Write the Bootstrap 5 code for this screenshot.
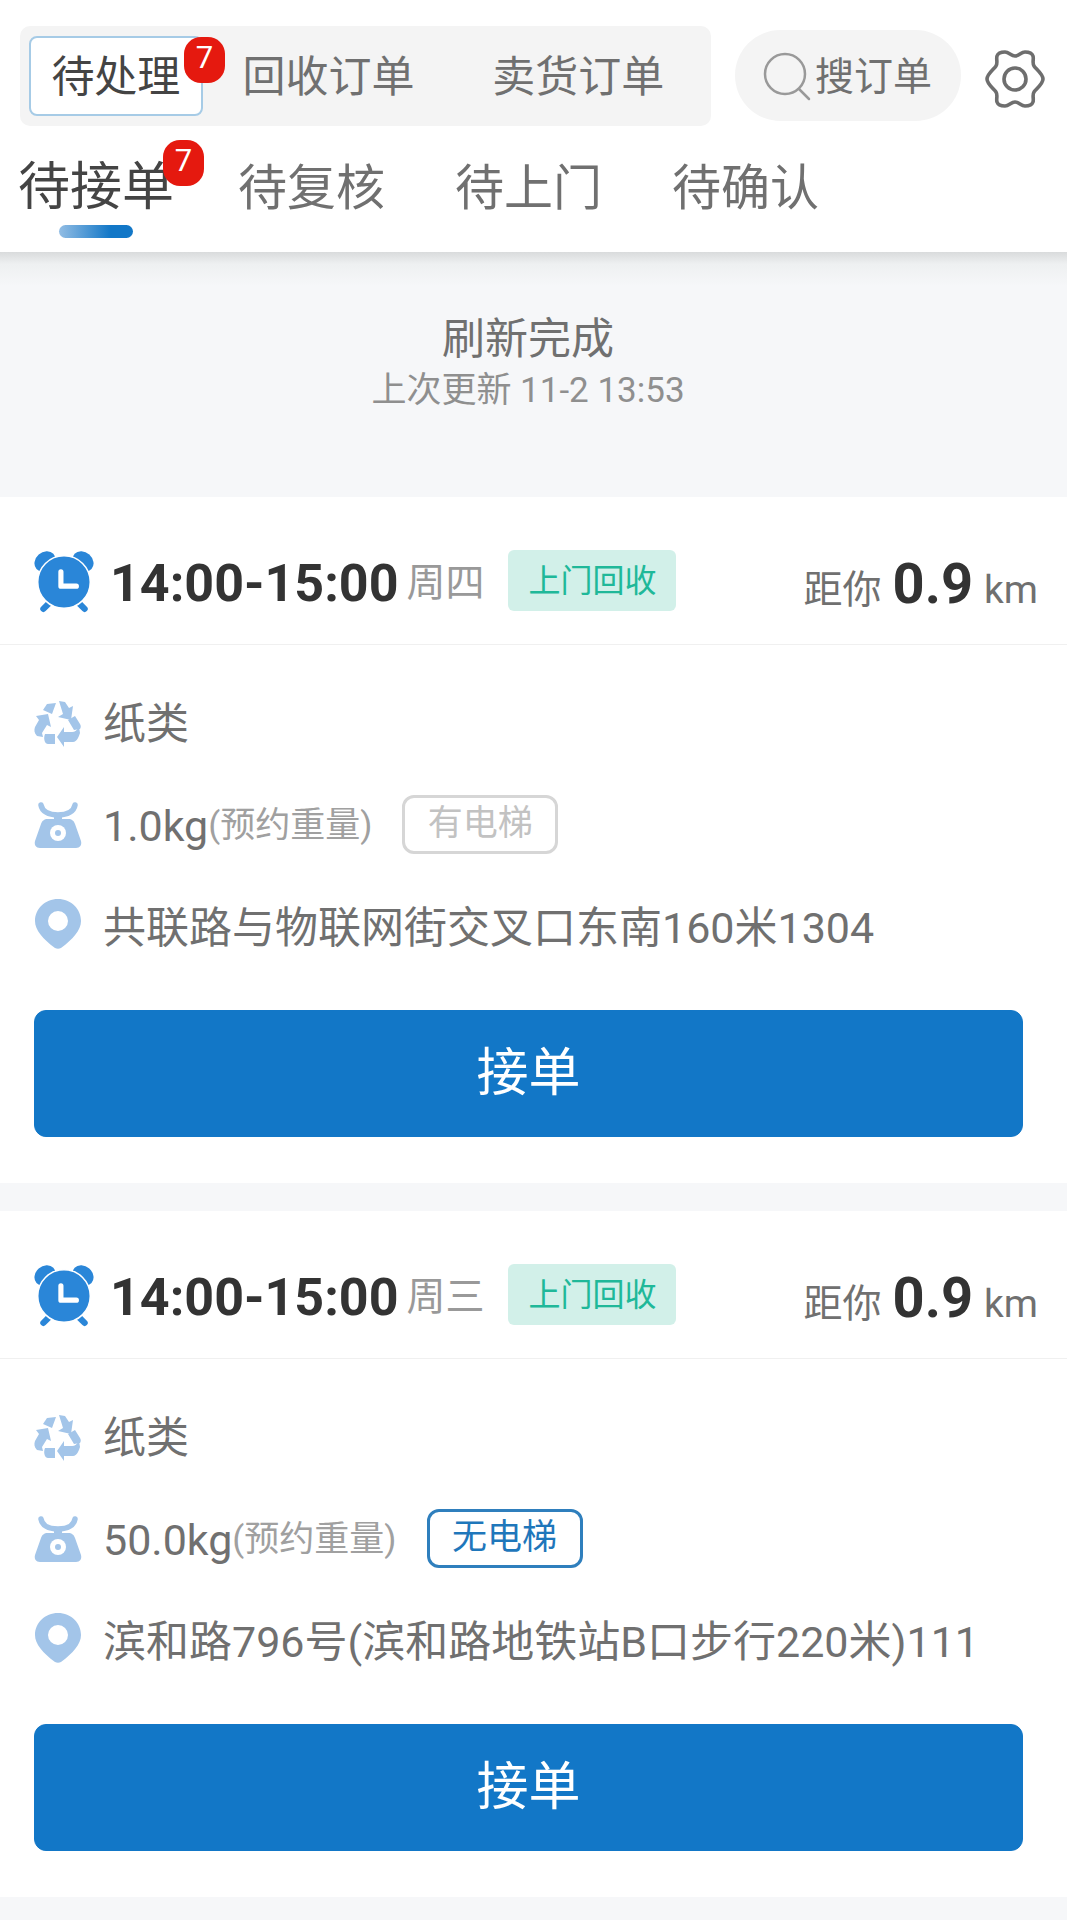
<!DOCTYPE html>
<html lang="zh-CN">
<head>
  <meta charset="UTF-8">
  <meta name="viewport" content="width=device-width, initial-scale=1.0">
  <title>待处理订单</title>
  <link href="https://cdn.jsdelivr.net/npm/bootstrap@5.3.3/dist/css/bootstrap.min.css" rel="stylesheet">
  <style>
    body {
      width: 1080px;
      height: 1920px;
      overflow: hidden;
      background: #fff;
      font-family: Roboto, "Noto Sans CJK SC", sans-serif;
      color: #707070;
    }
    .page-wrap { width: 1067px; height: 1920px; background: #f6f7f9; }
    .top-head { height: 252px; background: #fff; padding: 26px 0 0 20px; }
    .seg-box { width: 691px; height: 100px; background: #f4f4f4; border-radius: 10px; padding: 10px 9px; }
    .seg-item { width: 250px; font-size: 43px; line-height: 1; color: #707070; padding-top: 3px; padding-left: 2px; }
    .seg-item.on { width: 174px; background: #fff; border: 2px solid #a6cbe6; border-radius: 8px; color: #444; padding-left: 0; }
    .search-pill { width: 226px; height: 91px; margin: 0 0 0 24px; background: #f4f4f4; border-radius: 46px; padding: 3px 0 0 28px; font-size: 39px; color: #707070; }
    .gear { margin-left: 24px; }
    .count-dot {
      top: -1px; width: 41px; height: 46px; background: #e5190f; color: #fff; border-radius: 17px;
      font-size: 31px; line-height: 42px; text-align: center;
    }
    .count-seg { left: 153px; }
    .tab-row { height: 124px; gap: 70px; margin-left: -2px; }
    .tab-item { font-size: 49px; line-height: 1; color: #707070; }
    .tab-item.on { font-size: 52px; color: #444; margin-right: -6px; }
    .count-tab { left: 145px; top: -22px; }
    .tab-bar {
      left: 41px; top: 63px; width: 74px; height: 13px; border-radius: 7px;
      background: linear-gradient(90deg, #92bde4, #1277c7 70%);
    }
    .refresh-box {
      height: 245px; padding: 59px 11px 0 0; text-align: center;
      background: linear-gradient(#d9dbdc, #eef0f1 12px, #f6f7f9 34px);
    }
    .refresh-main { font-size: 43px; line-height: 56px; color: #707070; }
    .refresh-sub { font-size: 35px; line-height: 48px; color: #8f8f8f; }
    .order-box { height: 686px; background: #fff; margin-bottom: 28px; }
    .order-head { height: 148px; padding: 20px 29px 0 33px; border-bottom: 1px solid #f0f0f0; }
    .time-text { font-size: 52px; font-weight: 700; color: #333; margin: 6px 0 0 15px; line-height: 1; }
    .week-text { font-size: 39px; color: #999; margin: 6px 0 0 8px; line-height: 1; }
    .tag-green { width: 168px; height: 61px; background: #d2f0e9; color: #20b899; border-radius: 6px; font-size: 32px; margin-left: 24px; }
    .dist-text { font-size: 39px; color: #707070; line-height: 1; padding-top: 6px; }
    .dist-text b { font-size: 56px; color: #333; margin: 0 11px; }
    .dist-text .km-unit { font-size: 39px; }
    .order-body { padding: 28px 34px 0; }
    .info-row { height: 102px; font-size: 43px; color: #707070; }
    .info-row svg { flex: none; margin-right: 21px; }
    .info-row .pin-ic { margin-top: -8px; }
    .hint-text { font-size: 35px; color: #a0a0a0; }
    .lift-tag { width: 156px; height: 59px; border: 3px solid #d6d6d6; border-radius: 12px; color: #c2c2c2; font-size: 35px; margin: -4px 0 0 30px; }
    .lift-tag.has-none { border-color: #2f7fbd; color: #1f77bb; }
    .take-btn { width: 989px; height: 127px; margin-top: 31px; background: #1277c7; border-color: #1277c7; border-radius: 12px; font-size: 52px; color: #fff; }
  </style>
</head>
<body>
  <svg width="0" height="0" class="position-absolute">
    <defs>
      <symbol id="ic-clock" viewBox="0 0 60 64">
        <ellipse cx="11.500" cy="13" rx="11" ry="9" transform="rotate(-42 11.500 13)" fill="#2a86d8"/>
        <ellipse cx="48.500" cy="13" rx="11" ry="9" transform="rotate(42 48.500 13)" fill="#2a86d8"/>
        <path d="M15 54l-5 5M45 54l5 5" stroke="#2a86d8" stroke-width="6" stroke-linecap="round"/>
        <circle cx="30" cy="33" r="25.500" fill="#2a86d8" stroke="#fff" stroke-width="1.500"/>
        <path d="M27 23v14h15" fill="none" stroke="#fff" stroke-width="5" stroke-linecap="round" stroke-linejoin="round"/>
      </symbol>
      <symbol id="ic-recycle" viewBox="0 0 48 48">
        <g fill="#a3c5e9">
          <path d="M13 4l9-1-4 11-9-4z"/>
          <path d="M25 1l6 1 4 6 4-2-2 14-13-3 5-3z"/>
          <path d="M2 16l12-2 3 13-4-2-5 8 1 4-6-1c-3-3-3-6-2-9l4-7z"/>
          <path d="M11 34h10v10h-7c-3 0-5-5-3-10z"/>
          <path d="M23 37l7-10v5h8c3 0 5-2 7-5l1 6c-1 3-3 9-7 9h-9v5z"/>
          <path d="M34 20l7-4 5 8c1 2 1 3 0 5l-6 1z"/>
        </g>
      </symbol>
      <symbol id="ic-scale" viewBox="-1 0 48 48">
        <path d="M6 3c1 6 7 10 17 10s16-4 17-10" fill="none" stroke="#a3c5e9" stroke-width="5.500" stroke-linecap="round"/>
        <path d="M19 13h8v6h-8z" fill="#a3c5e9"/>
        <path d="M13 17h20c4 0 6 2 7 5l6 17c1 4-1 7-5 7H5c-4 0-6-3-5-7l6-17c1-3 3-5 7-5z" fill="#a3c5e9"/>
        <circle cx="23" cy="31" r="8" fill="#fff"/>
        <circle cx="23" cy="31" r="3" fill="#a3c5e9"/>
      </symbol>
      <symbol id="ic-pin" viewBox="0 0 48 52">
        <path fill-rule="evenodd" d="M24 1c13 0 23 10 23 22 0 9-8 18-20 27-2 1-4 1-6 0C9 41 1 32 1 23 1 11 11 1 24 1zm0 12a10 10 0 1 0 0 20 10 10 0 0 0 0-20z" fill="#a3c5e9"/>
      </symbol>
    </defs>
  </svg>

  <div class="page-wrap">
    <header class="top-head">
      <div class="d-flex align-items-start">
        <div class="seg-box d-flex">
          <div class="seg-item on d-flex align-items-center justify-content-center position-relative">待处理
            <span class="count-dot count-seg position-absolute">7</span>
          </div>
          <div class="seg-item d-flex align-items-center justify-content-center">回收订单</div>
          <div class="seg-item d-flex align-items-center justify-content-center">卖货订单</div>
        </div>
        <div class="search-pill d-flex align-items-center mt-1">
          <svg width="52" height="50" viewBox="0 0 52 50" fill="none" stroke="#999" stroke-width="2.500" stroke-linecap="round">
            <circle cx="22" cy="22" r="20"/><path d="M36 37l10 10"/>
          </svg>
          <span>搜订单</span>
        </div>
        <svg class="gear mt-4" width="60" height="58" viewBox="0 0 60 58" fill="none" stroke="#6e6e6e" stroke-width="3.600" stroke-linejoin="round">
          <path d="M30 6C26 6 24 2 20 2 17 2 13 3 12 6 11 9 13 13 11 16 9 19 2 24 2 29 2 34 9 39 11 42 13 45 11 49 12 52 13 55 17 56 20 56 24 56 26 52 30 52 34 52 36 56 40 56 43 56 47 55 48 52 49 49 47 45 49 42 51 39 58 34 58 29 58 24 51 19 49 16 47 13 49 9 48 6 47 3 43 2 40 2 36 2 34 6 30 6z"/>
          <circle cx="30" cy="29" r="11"/>
        </svg>
      </div>
      <div class="tab-row d-flex align-items-center">
        <div class="tab-item on position-relative">待接单
          <span class="count-dot count-tab position-absolute">7</span>
          <span class="tab-bar position-absolute"></span>
        </div>
        <div class="tab-item">待复核</div>
        <div class="tab-item">待上门</div>
        <div class="tab-item">待确认</div>
      </div>
    </header>

    <section class="refresh-box">
      <div class="refresh-main">刷新完成</div>
      <div class="refresh-sub">上次更新 11-2 13:53</div>
    </section>

    <article class="order-box">
      <div class="order-head d-flex align-items-center">
        <svg width="62" height="66"><use href="#ic-clock"/></svg>
        <span class="time-text">14:00-15:00</span>
        <span class="week-text">周四</span>
        <span class="tag-green d-flex align-items-center justify-content-center">上门回收</span>
        <span class="dist-text ms-auto">距你<b>0.9</b><span class="km-unit">km</span></span>
      </div>
      <div class="order-body">
        <div class="info-row d-flex align-items-center">
          <svg width="48" height="48"><use href="#ic-recycle"/></svg>纸类
        </div>
        <div class="info-row d-flex align-items-center">
          <svg width="48" height="48"><use href="#ic-scale"/></svg>1.0kg<span class="hint-text">(预约重量)</span>
          <span class="lift-tag d-flex align-items-center justify-content-center">有电梯</span>
        </div>
        <div class="info-row d-flex align-items-center">
          <svg class="pin-ic" width="48" height="52"><use href="#ic-pin"/></svg>共联路与物联网街交叉口东南160米1304
        </div>
        <button type="button" class="btn take-btn d-flex align-items-center justify-content-center">接单</button>
      </div>
    </article>

    <article class="order-box">
      <div class="order-head d-flex align-items-center">
        <svg width="62" height="66"><use href="#ic-clock"/></svg>
        <span class="time-text">14:00-15:00</span>
        <span class="week-text">周三</span>
        <span class="tag-green d-flex align-items-center justify-content-center">上门回收</span>
        <span class="dist-text ms-auto">距你<b>0.9</b><span class="km-unit">km</span></span>
      </div>
      <div class="order-body">
        <div class="info-row d-flex align-items-center">
          <svg width="48" height="48"><use href="#ic-recycle"/></svg>纸类
        </div>
        <div class="info-row d-flex align-items-center">
          <svg width="48" height="48"><use href="#ic-scale"/></svg>50.0kg<span class="hint-text">(预约重量)</span>
          <span class="lift-tag has-none d-flex align-items-center justify-content-center">无电梯</span>
        </div>
        <div class="info-row d-flex align-items-center">
          <svg class="pin-ic" width="48" height="52"><use href="#ic-pin"/></svg>滨和路796号(滨和路地铁站B口步行220米)111
        </div>
        <button type="button" class="btn take-btn d-flex align-items-center justify-content-center">接单</button>
      </div>
    </article>
  </div>

  <script src="https://cdn.jsdelivr.net/npm/bootstrap@5.3.3/dist/js/bootstrap.bundle.min.js"></script>
</body>
</html>
